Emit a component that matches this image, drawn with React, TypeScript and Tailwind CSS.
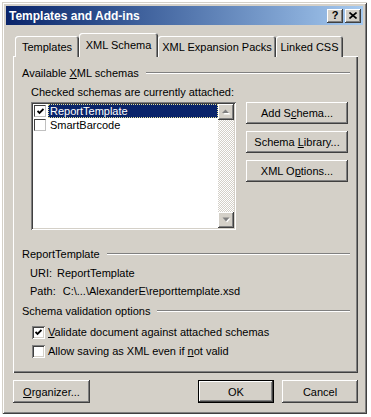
import React from "react";

const raised =
  "bg-[#d4d0c8] shadow-[inset_-1px_-1px_#404040,inset_1px_1px_#ffffff,inset_-2px_-2px_#808080,inset_2px_2px_#d4d0c8]";
const sunken =
  "shadow-[inset_1px_1px_#808080,inset_-1px_-1px_#ffffff,inset_2px_2px_#404040,inset_-2px_-2px_#d4d0c8]";

const CheckMark = () => (
  <svg width="7" height="7" viewBox="0 0 7 7">
    <polyline points="0.5,3 2.5,5 6.5,1" fill="none" stroke="#000" strokeWidth="1.8" />
  </svg>
);

const CheckBox = ({ checked }: { checked?: boolean }) => (
  <div className={`w-[13px] h-[13px] bg-white flex items-center justify-center shrink-0 ${sunken}`}>
    {checked && <CheckMark />}
  </div>
);

const ListCheck = ({ checked }: { checked?: boolean }) => (
  <div className="w-[12px] h-[12px] bg-white border border-t-[#404040] border-l-[#404040] border-r-[#c0c0c0] border-b-[#c0c0c0] flex items-center justify-center shrink-0">
    {checked && <CheckMark />}
  </div>
);

const Arrow = ({ up }: { up?: boolean }) => (
  <svg width="9" height="6" viewBox="0 0 9 6">
    {up ? (
      <>
        <polygon points="4.5,1.5 8.5,5.5 1.5,5.5" fill="#ffffff" />
        <polygon points="3.5,0.5 7,4 0,4" fill="#808080" />
      </>
    ) : (
      <>
        <polygon points="1.5,1.5 8.5,1.5 5,5.5" fill="#ffffff" />
        <polygon points="0.5,0.5 7.5,0.5 4,4.5" fill="#808080" />
      </>
    )}
  </svg>
);

const GroupHeader = ({ children }: { children: React.ReactNode }) => (
  <div className="flex items-center h-[14px] leading-[14px]">
    <span>{children}</span>
    <div className="flex-1 ml-[7px] h-[2px] border-t border-t-[#808080] border-b border-b-white" />
  </div>
);

const Button = ({ children, w, dflt }: { children: React.ReactNode; w: string; dflt?: boolean }) => (
  <div className={`${w} h-[23px] flex ${dflt ? "border border-black" : ""}`}>
    <div className={`flex-1 flex items-center justify-center leading-[14px] ${raised}`}>
      <span>{children}</span>
    </div>
  </div>
);

const SideButton = ({ children }: { children: React.ReactNode }) => (
  <div className="w-[102px] h-[22px] flex">
    <div className={`flex-1 flex items-center justify-center leading-[14px] ${raised}`}>
      <span>{children}</span>
    </div>
  </div>
);

const Tab = ({ label, w, active }: { label: string; w: string; active?: boolean }) =>
  active ? (
    <div
      className={`${w} h-[24px] relative z-10 bg-[#d4d0c8] rounded-t-[3px] pt-[5px] text-center leading-[14px] shadow-[inset_1px_1px_#ffffff,inset_-1px_0_#404040,inset_-2px_0_#808080]`}
    >
      {label}
    </div>
  ) : (
    <div
      className={`${w} h-[21px] bg-[#d4d0c8] rounded-t-[3px] pt-[4px] text-center leading-[14px] shadow-[inset_1px_1px_#ffffff,inset_-1px_0_#404040,inset_-2px_0_#808080]`}
    >
      {label}
    </div>
  );

export default function App() {
  return (
    <div className="w-[371px] h-[417px] bg-white font-['Liberation_Sans',Arial,sans-serif] text-[11px] text-black overflow-hidden">
      <div className="ml-[2px] mt-[2px] w-[365px] h-[412px] p-[4px] bg-[#d4d0c8] shadow-[inset_1px_1px_#d4d0c8,inset_-1px_-1px_#404040,inset_2px_2px_#ffffff,inset_-2px_-2px_#808080]">
        {/* title bar */}
        <div className="h-[19px] flex items-center pl-[3px] pr-[2px] bg-gradient-to-r from-[#0a246a] to-[#a6caf0]">
          <span className="flex-1 text-white font-bold text-[12px] leading-[14px]">Templates and Add-ins</span>
          <div className={`w-[16px] h-[14px] flex items-center justify-center font-bold text-[11px] leading-[11px] ${raised}`}>?</div>
          <div className={`ml-[2px] w-[16px] h-[14px] flex items-center justify-center ${raised}`}>
            <svg width="8" height="7" viewBox="0 0 8 7">
              <path d="M0.5 0.5 L7.5 6.5 M7.5 0.5 L0.5 6.5" stroke="#000" strokeWidth="1.6" />
            </svg>
          </div>
        </div>

        <div className="pl-[7px] pr-[5px]">
          {/* tabs */}
          <div className="mt-[8px] -mb-px flex items-end pl-[2px]">
            <Tab label="Templates" w="w-[64px]" />
            <Tab label="XML Schema" w="w-[79px]" active />
            <Tab label="XML Expansion Packs" w="w-[118px]" />
            <Tab label="Linked CSS" w="w-[67px]" />
          </div>

          {/* panel */}
          <div className="h-[317px] border-t border-l border-white px-[8px] pt-[9px] shadow-[inset_-1px_-1px_#404040,inset_-2px_-2px_#808080]">
            <GroupHeader>
              Available <u>X</u>ML schemas
            </GroupHeader>
            <div className="mt-[5px] ml-[9px] leading-[14px]">Checked schemas are currently attached:</div>
            <div className="mt-[3px] ml-[9px] flex items-start">
              <div className={`w-[205px] h-[128px] bg-white p-[2px] flex ${sunken}`}>
                <div className="flex-1 pl-[1px]">
                  <div className="h-[14px] flex items-center">
                    <ListCheck checked />
                    <div className="ml-[2px] flex-1 h-[14px] bg-[#0a246a] text-white pl-[1px] leading-[12px] border border-dotted border-[#e6e29a]">
                      ReportTemplate
                    </div>
                  </div>
                  <div className="h-[14px] flex items-center">
                    <ListCheck />
                    <div className="ml-[2px] flex-1 pl-[2px] leading-[14px]">SmartBarcode</div>
                  </div>
                </div>
                <div className="w-[16px] flex flex-col bg-[repeating-conic-gradient(#d4d0c8_0%_25%,#ffffff_0%_50%)] bg-size-[2px_2px]">
                  <div className={`h-[16px] flex items-center justify-center ${raised}`}>
                    <Arrow up />
                  </div>
                  <div className="flex-1" />
                  <div className={`h-[16px] flex items-center justify-center ${raised}`}>
                    <Arrow />
                  </div>
                </div>
              </div>
              <div className="ml-[10px] flex flex-col gap-[7px]">
                <SideButton>
                  Add S<u>c</u>hema...
                </SideButton>
                <SideButton>
                  Schema <u>L</u>ibrary...
                </SideButton>
                <SideButton>
                  XML O<u>p</u>tions...
                </SideButton>
              </div>
            </div>

            <div className="mt-[17px]">
              <GroupHeader>ReportTemplate</GroupHeader>
            </div>
            <div className="mt-[5px] ml-[8px] flex leading-[14px]">
              <span>URI:</span>
              <span className="ml-[5px]">ReportTemplate</span>
            </div>
            <div className="mt-[4px] ml-[8px] flex leading-[14px]">
              <span>Path:</span>
              <span className="ml-[7px]">C:\...\AlexanderE\reporttemplate.xsd</span>
            </div>

            <div className="mt-[6px]">
              <GroupHeader>Schema validation options</GroupHeader>
            </div>
            <div className="mt-[8px] ml-[10px] flex items-center h-[13px]">
              <CheckBox checked />
              <span className="ml-[3px] leading-[13px]">
                <u>V</u>alidate document against attached schemas
              </span>
            </div>
            <div className="mt-[6px] ml-[10px] flex items-center h-[13px]">
              <CheckBox />
              <span className="ml-[3px] leading-[13px]">
                Allow saving as XML even if <u>n</u>ot valid
              </span>
            </div>
          </div>

          {/* bottom buttons */}
          <div className="mt-[7px] flex">
            <Button w="w-[77px]">
              <u>O</u>rganizer...
            </Button>
            <div className="flex-1" />
            <Button w="w-[76px]" dflt>
              OK
            </Button>
            <div className="ml-[8px]">
              <Button w="w-[76px]">Cancel</Button>
            </div>
          </div>
        </div>
      </div>
    </div>
  );
}
